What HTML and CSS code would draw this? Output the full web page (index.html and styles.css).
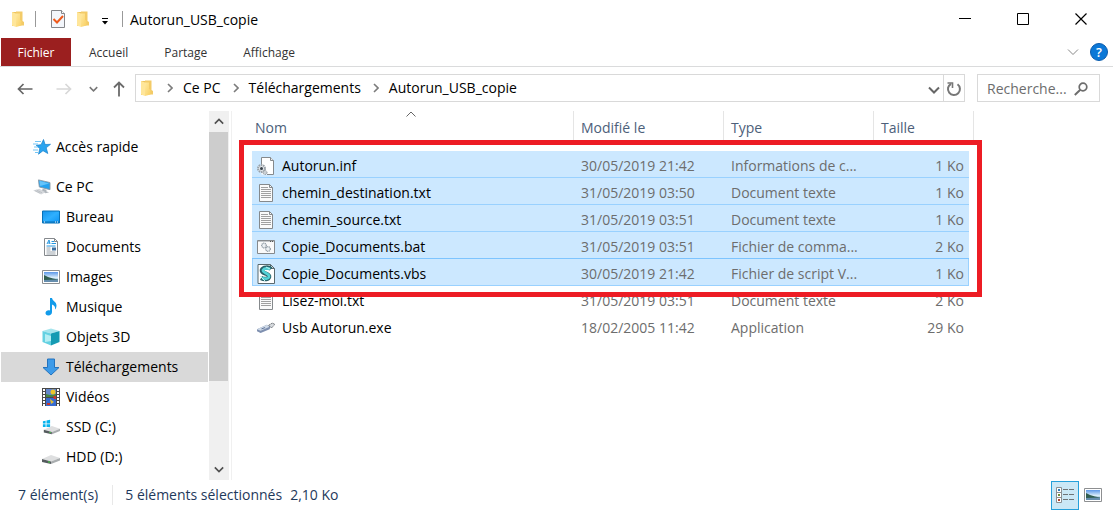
FILE: index.html
```html
<!DOCTYPE html>
<html lang="fr">
<head>
<meta charset="utf-8">
<meta name="viewport" content="width=device-width, initial-scale=1">
<title>Autorun_USB_copie</title>
<link rel="stylesheet" href="styles.css">
</head>
<body>
<svg class="sprite" aria-hidden="true">
  <defs>
    <linearGradient id="gold" x1="0" x2="1" y1="0" y2="1"><stop offset="0" stop-color="#ffe9a0"/><stop offset="1" stop-color="#f9cf62"/></linearGradient>
    <linearGradient id="blue" x1="0" x2="1" y1="0" y2="1"><stop offset="0" stop-color="#1592ea"/><stop offset=".5" stop-color="#2fb0ff"/><stop offset="1" stop-color="#0c93f3"/></linearGradient>
    <linearGradient id="sky" x1="0" x2="0" y1="0" y2="1"><stop offset="0" stop-color="#5b97e8"/><stop offset=".55" stop-color="#d9ecfa"/><stop offset="1" stop-color="#5f94b8"/></linearGradient>
  </defs>
  <symbol id="folder" viewBox="0 0 12 16"><path d="M0 1h6v14H0z" fill="#eec35c"/><path d="M4 .500h6.500v9.500l1.500 1v3.500H4z" fill="#f3cb68"/><path d="M0 1l4 1.500V16l-4-1.500z" fill="#ffe69a"/><path d="M4 2.500h4V9l1.500 1v4.500L4 16z" fill="url(#gold)"/></symbol>
  <symbol id="checkdoc" viewBox="0 0 14 18"><path d="M.5.500h10l3 3v14H.5z" fill="#f3f6fb" stroke="#85868a"/><path d="M10.500.500v3h3" fill="#fff" stroke="#85868a"/><path d="M2.500 9l3.500 3.500L12 6" fill="none" stroke="#ee5a1c" stroke-width="2"/></symbol>
  <symbol id="star" viewBox="0 0 18 16"><path d="M10.500.500l1.600 5 5.400-.200-4.300 3.500 1.600 5.700-4.800-2.800-4.500 3.500 1.300-5.700-3.600-3.200 4.900-.600z" fill="#2ba4ef" stroke="#1680cb" stroke-width=".7"/><path d="M2 2.500h6M0 5h5M1 8h4M0 11h5M2 13.500h3" stroke="#72c5f5"/></symbol>
  <symbol id="pc" viewBox="0 0 20 18"><path d="M6 1l13 3v8L7 9z" fill="#26a2ef" stroke="#8b98a5"/><path d="M7 2l11 3-10 3z" fill="#65c4fb"/><path d="M11 11l4 1v2l3 1-4 1-5-2z" fill="#aeb4ba"/><path d="M0 13l7-2 7 4-5 2.500z" fill="#d5d8dc"/><path d="M2 13l6 3M4 12.500l6 3" stroke="#a9aeb4" stroke-width=".6"/></symbol>
  <symbol id="desktop" viewBox="0 0 18 13"><path d="M.5.500h17v12H.5z" fill="url(#blue)" stroke="#0872b8"/><path d="M1 11.500h16" stroke="#076cb2"/><path d="M2 11.500h1M13 11.500h1M15 11.500h1" stroke="#fff"/></symbol>
  <symbol id="document" viewBox="0 0 14 18"><path d="M.5.500h10l3 3v14H.5z" fill="#fff" stroke="#85898d"/><path d="M10.500.500v3h3" fill="none" stroke="#85898d"/><path d="M3 6l2-4 1 4M4 5h2M7.500 3.500H10M7.500 5.500H12M2.500 8h9" fill="none" stroke="#2496df"/><path d="M2.500 10h4M2.500 12h4M2.500 14h9M2.500 16h9" stroke="#9ca5ad"/><path d="M8 9.500h4v3H8z" fill="#3e6f9f"/></symbol>
  <symbol id="picture" viewBox="0 0 18 14"><path d="M.5.500h17v13H.5z" fill="#fff" stroke="#8d8f91"/><path d="M2 2h14v10H2z" fill="url(#sky)"/><path d="M2 5l4 2 5 1.500 5 1V10H2z" fill="#315e50"/><path d="M2 10l14-.500V12H2z" fill="#668eae"/></symbol>
  <symbol id="music" viewBox="0 0 12 18"><path d="M5 0h2c.5 3 4.500 3.500 4.500 7.500 0 1.500-.5 3-1.500 4 .5-3-.8-4-3-5V14c0 2-1.500 3.500-3.800 3.500C1.500 17.500.5 16.500.5 15c0-2 2.500-3.500 4.500-2.500z" fill="#129bea"/></symbol>
  <symbol id="cube" viewBox="0 0 18 18"><path d="M9 .500L17.500 3 9 5.500.5 3z" fill="#a6e5ed"/><path d="M.5 3L9 5.500v12L.5 14z" fill="#64d1e2"/><path d="M9 5.500L17.500 3v11L9 17.500z" fill="#159bb3"/><path d="M3 6l6 2v5l-6 1z" fill="#b5eef3"/></symbol>
  <symbol id="down" viewBox="0 0 18 18"><path d="M5.500 1h7v8.500h4.500L9 17 1 9.500h4.500z" fill="#3d9be9" stroke="#2473bd"/></symbol>
  <symbol id="video" viewBox="0 0 18 18"><path d="M0 0h18v19H0z" fill="#494949"/><path d="M4 1h10v8H4z" fill="#6387ca"/><path d="M4 10h10v8H4z" fill="#376bd1"/><path d="M4 6l4 1 6-1v3H4z" fill="#458743"/><circle cx="11" cy="4" r="2.500" fill="#ecc629"/><path d="M11 8h3v3h-2zM5 15h3v2H5z" fill="#c9352b"/><path d="M8 11l4 3-3 2z" fill="#e2bd35"/><path d="M2 1v17M16 1v17" stroke="#fff" stroke-width="2" stroke-dasharray="2 1"/></symbol>
  <symbol id="disk" viewBox="0 0 18 16"><path d="M0 10l9-4 9 3-9 3.500z" fill="#dedfe0"/><path d="M0 10l9 2.500V15L0 13z" fill="#555b5e"/><path d="M9 12.500L18 9v2.500L9 15z" fill="#a9adaf"/><path d="M6 12.500h2v1H6z" fill="#45da43"/></symbol>
  <symbol id="ssd" viewBox="0 0 20 16"><path d="M1 1.500l3-.500v3H1zM5 .800L9 0v4H5zM1 5h3v3H1zM5 5h4v3H5z" fill="#06b3ed"/><path d="M2 11l9-4 9 3-9 3.500z" fill="#dedfe0"/><path d="M2 11l9 2.500V16l-9-2z" fill="#555b5e"/><path d="M11 13.500L20 10v2.500L11 16z" fill="#a9adaf"/><path d="M8 13.500h2v1H8z" fill="#45da43"/></symbol>
  <symbol id="inf" viewBox="0 0 18 18"><path d="M4.500.500h8l4 4v13h-12z" fill="#fff"/><path d="M4.500 8V.500h9l3 3v14H10" fill="none" stroke="#85898c"/><path d="M13.500.500v3h3" fill="#eee" stroke="#85898c"/><circle cx="4.500" cy="11.500" r="3.500" fill="#e0e4e7" stroke="#99a1a8" stroke-width="2" stroke-dasharray="1.500 .7"/><circle cx="4.500" cy="11.500" r="1.500" fill="#39434c"/><circle cx="8" cy="15.500" r="2" fill="#cbd0d4" stroke="#8a9299" stroke-dasharray="1.200 .6"/></symbol>
  <symbol id="txt" viewBox="0 0 18 18"><path d="M2.500.500h10l3 3v14h-13z" fill="#fafafa" stroke="#85898c"/><path d="M12.500.500v3h3" fill="none" stroke="#85898c"/><path d="M4 3.500h7M4 5.500h10M4 7.500h10M4 9.500h10M4 11.500h10M4 13.500h10" stroke="#a0a0a0"/></symbol>
  <symbol id="bat" viewBox="0 0 18 18"><path d="M.5 2.500h17v13H.5z" fill="#fafafa" stroke="#85898c"/><path d="M1 3.500h16" stroke="#c3c7ca"/><path d="M13 3.500h1M15 3.500h1" stroke="#555"/><circle cx="7" cy="7.500" r="2.300" fill="#edf1f4" stroke="#919ca5" stroke-width="1.300" stroke-dasharray="1 .5"/><circle cx="11" cy="11" r="2.300" fill="#edf1f4" stroke="#919ca5" stroke-width="1.300" stroke-dasharray="1 .5"/></symbol>
  <symbol id="vbs" viewBox="0 0 18 20"><path d="M1 .500h12.500l4 4v15H1z" fill="#fff" stroke="#59696e"/><path d="M13.500.500v4h4" fill="none" stroke="#59696e"/><path d="M14 5C12 3 6 3 5 6c-1 4 8 3 7 7-.5 2-4 3-8 1" fill="none" stroke="#28616a" stroke-width="4.500"/><path d="M13 5C11 4 7 4 6 6c-1 3 7 3 6 7-.5 2-4 2-7 1" fill="none" stroke="#54d3d8" stroke-width="2.700"/><path d="M3 12l5 5M9 3l4 2" stroke="#bdf5f4"/></symbol>
  <symbol id="usb" viewBox="0 0 20 14"><path d="M0 8.500l11-5 4 2-1 3-10 4-4-2z" fill="#7f90b0"/><path d="M0 8.500l11-5 3 2-10 4.500z" fill="#cfdae7"/><path d="M13 4l4-2.500L20 3l-4 4z" fill="#d6dade" stroke="#20252b" stroke-width=".8" stroke-dasharray="1.500 1"/><path d="M5 8l4-1.500" stroke="#556b92"/></symbol>
  <symbol id="chev-r" viewBox="0 0 6 10"><path d="M1 1l4 4-4 4" fill="none" stroke="#7c7c7c" stroke-width="1.600"/></symbol>
  <symbol id="chev-d" viewBox="0 0 12 8"><path d="M1 1.500l5 5 5-5" fill="none" stroke="currentColor" stroke-width="var(--stroke, 2)"/></symbol>
  <symbol id="arrow" viewBox="0 0 16 12"><path d="M15.500 6H1.500M6.500 1l-5 5 5 5" fill="none" stroke="currentColor" stroke-width="1.700"/></symbol>
</svg>

<div class="window">
  <header class="titlebar">
    <svg class="i-folder"><use href="#folder"/></svg>
    <span class="bar"></span>
    <button class="plain q-check" aria-label="Propriétés"><svg class="i-check"><use href="#checkdoc"/></svg></button>
    <button class="plain q-new" aria-label="Nouveau dossier"><svg class="i-folder"><use href="#folder"/></svg></button>
    <button class="plain q-more" aria-label="Personnaliser"><svg class="i-more" viewBox="0 0 8 8"><path d="M1 1.500h6" stroke="#000"/><path d="M1 4h6L4 7.500z"/></svg></button>
    <span class="bar"></span>
    <h1 class="title">Autorun_USB_copie</h1>
    <div class="controls">
      <button class="plain" aria-label="Réduire"><svg class="i-ctl" viewBox="0 0 12 12"><path d="M0 5.500h12" stroke="#000"/></svg></button>
      <button class="plain" aria-label="Agrandir"><svg class="i-ctl" viewBox="0 0 12 12"><path d="M.5.500h11v11H.5z" fill="none" stroke="#000"/></svg></button>
      <button class="plain" aria-label="Fermer"><svg class="i-ctl" viewBox="0 0 12 12"><path d="M.5.500l11 11M11.500.500l-11 11" stroke="#000" stroke-width="1.200"/></svg></button>
    </div>
  </header>

  <nav class="tabs">
    <button class="tab tab-file">Fichier</button>
    <button class="tab">Accueil</button>
    <button class="tab">Partage</button>
    <button class="tab">Affichage</button>
    <button class="plain tab-expand" aria-label="Développer le ruban"><svg class="i-chev thin"><use href="#chev-d"/></svg></button>
    <button class="help" aria-label="Aide">?</button>
  </nav>

  <div class="address-row">
    <button class="plain nav-btn" aria-label="Précédent"><svg class="i-arrow"><use href="#arrow"/></svg></button>
    <button class="plain nav-btn off" aria-label="Suivant"><svg class="i-arrow flip"><use href="#arrow"/></svg></button>
    <button class="plain nav-recent" aria-label="Emplacements récents"><svg class="i-chev-s"><use href="#chev-d"/></svg></button>
    <button class="plain nav-up" aria-label="Dossier parent"><svg class="i-up" viewBox="0 0 12 16"><path d="M6 15.500V1.500M1 6.500l5-5 5 5" fill="none" stroke="#6b6b6b" stroke-width="1.800"/></svg></button>
    <div class="address">
      <svg class="i-folder"><use href="#folder"/></svg>
      <svg class="i-sep"><use href="#chev-r"/></svg>
      <a class="crumb" href="#">Ce PC</a>
      <svg class="i-sep"><use href="#chev-r"/></svg>
      <a class="crumb" href="#">Téléchargements</a>
      <svg class="i-sep"><use href="#chev-r"/></svg>
      <a class="crumb" href="#">Autorun_USB_copie</a>
      <button class="plain addr-drop" aria-label="Historique"><svg class="i-chev"><use href="#chev-d"/></svg></button>
      <button class="plain refresh" aria-label="Actualiser"><svg class="i-refresh" viewBox="0 0 16 16"><path d="M11.500 3.200A6 6 0 1 1 5 2.800" fill="none" stroke="#777" stroke-width="2"/><path d="M1.500 2h5v5" fill="none" stroke="#777" stroke-width="1.600"/></svg></button>
    </div>
    <div class="search">
      <input class="search-input" type="text" placeholder="Recherche..." aria-label="Recherche">
      <svg class="i-search" viewBox="0 0 14 14"><circle cx="9" cy="5" r="3.800" fill="none" stroke="#6d6d6d" stroke-width="1.700"/><path d="M6.300 7.700L.8 13" stroke="#6d6d6d" stroke-width="2"/></svg>
    </div>
  </div>

  <main class="main">
    <nav class="tree">
      <a class="node root" href="#"><svg class="i-root"><use href="#star"/></svg>Accès rapide</a>
      <a class="node root pc" href="#"><svg class="i-root"><use href="#pc"/></svg>Ce PC</a>
      <a class="node" href="#"><svg class="i-node"><use href="#desktop"/></svg>Bureau</a>
      <a class="node" href="#"><svg class="i-node"><use href="#document"/></svg>Documents</a>
      <a class="node" href="#"><svg class="i-node"><use href="#picture"/></svg>Images</a>
      <a class="node" href="#"><svg class="i-node"><use href="#music"/></svg>Musique</a>
      <a class="node" href="#"><svg class="i-node"><use href="#cube"/></svg>Objets 3D</a>
      <a class="node current" href="#"><svg class="i-node"><use href="#down"/></svg>Téléchargements</a>
      <a class="node" href="#"><svg class="i-node"><use href="#video"/></svg>Vidéos</a>
      <a class="node" href="#"><svg class="i-node"><use href="#ssd"/></svg>SSD (C:)</a>
      <a class="node" href="#"><svg class="i-node"><use href="#disk"/></svg>HDD (D:)</a>
    </nav>
    <div class="scroll">
      <button class="plain scroll-btn" aria-label="Défiler vers le haut"><svg class="i-scroll up"><use href="#chev-d"/></svg></button>
      <div class="thumb"></div>
      <div class="track"></div>
      <button class="plain scroll-btn" aria-label="Défiler vers le bas"><svg class="i-scroll"><use href="#chev-d"/></svg></button>
    </div>
    <section class="pane">
      <table class="files">
        <colgroup><col class="c-name"><col class="c-mid"><col class="c-mid"><col class="c-size"><col class="c-end"></colgroup>
        <thead>
          <tr><th scope="col">Nom<svg class="sort" viewBox="0 0 10 6"><path d="M.5 5.500l4.500-4.500 4.500 4.500" fill="none" stroke="#666"/></svg></th><th scope="col">Modifié le</th><th scope="col">Type</th><th scope="col" colspan="2">Taille</th></tr>
        </thead>
        <tbody>
          <tr class="sel"><td><span class="file"><svg class="i-file"><use href="#inf"/></svg>Autorun.inf</span></td><td>30/05/2019 21:42</td><td>Informations de c...</td><td>1 Ko</td></tr>
          <tr class="sel"><td><span class="file"><svg class="i-file"><use href="#txt"/></svg>chemin_destination.txt</span></td><td>31/05/2019 03:50</td><td>Document texte</td><td>1 Ko</td></tr>
          <tr class="sel"><td><span class="file"><svg class="i-file"><use href="#txt"/></svg>chemin_source.txt</span></td><td>31/05/2019 03:51</td><td>Document texte</td><td>1 Ko</td></tr>
          <tr class="sel before-focus"><td><span class="file"><svg class="i-file"><use href="#bat"/></svg>Copie_Documents.bat</span></td><td>31/05/2019 03:51</td><td>Fichier de comma...</td><td>2 Ko</td></tr>
          <tr class="sel focus"><td><span class="file"><svg class="i-file tall"><use href="#vbs"/></svg>Copie_Documents.vbs</span></td><td>30/05/2019 21:42</td><td>Fichier de script V...</td><td>1 Ko</td></tr>
          <tr><td><span class="file"><svg class="i-file"><use href="#txt"/></svg>Lisez-moi.txt</span></td><td>31/05/2019 03:51</td><td>Document texte</td><td>2 Ko</td></tr>
          <tr><td><span class="file"><svg class="i-file"><use href="#usb"/></svg>Usb Autorun.exe</span></td><td>18/02/2005 11:42</td><td>Application</td><td>29 Ko</td></tr>
        </tbody>
      </table>
      <div class="highlight"></div>
    </section>
  </main>

  <footer class="status">
    <span class="count">7 élément(s)</span>
    <span class="picked">5 éléments sélectionnés</span>
    <span>2,10 Ko</span>
    <button class="view on" aria-label="Détails"><svg class="i-details" viewBox="0 0 18 16"><path d="M.5.500h5v15h-5zM.5 5.500h5M.5 10.500h5" fill="#fff" stroke="#8b8f92"/><path d="M2 3h2" stroke="#2e7cb5" stroke-width="2"/><path d="M2 8h2" stroke="#708b37" stroke-width="2"/><path d="M2 13h2" stroke="#b5442c" stroke-width="2"/><path d="M7 2.500h5M13 2.500h5M7 7.500h5M13 7.500h5M7 12.500h5M13 12.500h5" stroke="#6e7376"/></svg></button>
    <button class="view" aria-label="Grandes icônes"><svg class="i-large"><use href="#picture"/></svg></button>
  </footer>
</div>
</body>
</html>
```

FILE: styles.css
```css
* { box-sizing: border-box; }

body {
  margin: 0;
  background: #fff;
  color: #000;
  font: 14px/20px "Open Sans", "Noto Sans", sans-serif;
}

svg { display: block; flex: none; }
a { color: inherit; text-decoration: none; }
.sprite { position: absolute; width: 0; height: 0; }

.plain {
  display: flex;
  align-items: center;
  justify-content: center;
  padding: 0;
  border: 0;
  background: none;
  color: #666;
}

.window { display: flex; flex-direction: column; min-height: 100vh; }

/* Title bar */
.titlebar { display: flex; align-items: center; height: 38px; padding-left: 12px; }
.i-folder { width: 12px; height: 16px; }
.bar { width: 1px; height: 16px; margin-left: 11px; background: #999; }
.q-check { margin-left: 15px; }
.i-check { width: 14px; height: 18px; }
.q-new { margin-left: 12px; }
.q-more { margin-left: 12px; padding-top: 3px; }
.i-more { width: 8px; height: 8px; }
.q-more + .bar { margin-left: 13px; }
.title { margin: 0 0 0 7px; padding-top: 1px; font-size: 14px; font-weight: 400; line-height: 20px; }
.controls { display: flex; margin-left: auto; padding-right: 3px; }
.controls .plain { width: 58px; height: 38px; }
.i-ctl { width: 12px; height: 12px; }

/* Ribbon tabs */
.tabs { display: flex; align-items: center; padding: 0 5px 0 1px; border-bottom: 1px solid #dadbdc; }
.tab {
  height: 28px;
  padding: 1px 18px 0;
  border: 0;
  background: none;
  color: #333;
  font: 12px/16px "Open Sans", "Noto Sans", sans-serif;
}
.tab-file { width: 70px; padding: 1px 0 0; background: #9b1f1f; color: #fff; }
.tab-expand { margin-left: auto; }
.i-chev { width: 12px; height: 8px; }
.thin { --stroke: 1; color: #888; }
.help {
  width: 18px;
  height: 18px;
  margin-left: 11px;
  padding: 0;
  border: 1px solid #0b5cad;
  border-radius: 50%;
  background: #0b78d7;
  color: #fff;
  font: 600 13px/16px "Open Sans", sans-serif;
}

/* Address bar */
.address-row { display: flex; align-items: center; padding: 7px 13px 9px 17px; }
.nav-btn { width: 16px; height: 20px; padding-top: 2px; }
.i-arrow { width: 16px; height: 12px; }
.off { margin-left: 23px; color: #d8d8d8; }
.flip { transform: rotate(180deg); }
.nav-recent { margin-left: 17px; padding-top: 2px; color: #777; }
.i-chev-s { width: 9px; height: 6px; }
.nav-up { margin-left: 15px; padding-top: 2px; }
.i-up { width: 12px; height: 16px; }
.address {
  display: flex;
  flex: 1;
  align-items: center;
  height: 28px;
  margin-left: 10px;
  padding-left: 5px;
  border: 1px solid #d9d9d9;
}
.i-sep { width: 6px; height: 10px; margin-left: 12px; }
.i-folder + .i-sep { margin-left: 14px; }
.crumb { margin-left: 10px; }
.addr-drop { margin-left: auto; width: 19px; padding-top: 3px; }
.refresh { width: 21px; height: 26px; padding-top: 2px; border-left: 1px solid #d9d9d9; }
.i-refresh { width: 16px; height: 16px; }
.search {
  display: flex;
  align-items: center;
  width: 123px;
  height: 28px;
  margin-left: 12px;
  padding: 1px 11px 0 9px;
  border: 1px solid #d9d9d9;
}
.search-input {
  flex: 1;
  min-width: 0;
  padding: 0;
  border: 0;
  outline: 0;
  background: none;
  font: 14px/20px "Open Sans", "Noto Sans", sans-serif;
}
.search-input::placeholder { color: #6d6d6d; opacity: 1; }
.i-search { width: 14px; height: 14px; }

/* Navigation tree */
.main { display: flex; flex: 1; }
.tree { flex: none; width: 208px; padding: 21px 0 8px 1px; }
.node { display: flex; align-items: center; gap: 6px; height: 30px; padding-left: 41px; }
.root { gap: 4px; padding-left: 31px; }
.pc { margin-top: 10px; }
.i-root { width: 20px; height: 16px; }
.i-node { width: 18px; height: 18px; }
.current { background: #d9d9d9; }

.scroll { display: flex; flex: none; flex-direction: column; width: 20px; margin-left: 1px; background: #f0f0f0; }
.scroll-btn { height: 21px; color: #505050; }
.thumb { flex: 249; margin-right: 1px; background: #cdcdcd; }
.track { flex: 78; }
.i-scroll { width: 10px; height: 7px; }
.up { transform: rotate(180deg); }

/* File list */
.pane { position: relative; flex: 1; min-width: 0; margin-left: 2px; padding-left: 20px; border-left: 1px solid #f0f0f0; }
.files { width: 722px; table-layout: fixed; border-collapse: separate; border-spacing: 0; }
.c-name { width: 322px; }
.c-mid { width: 150px; }
.c-size { width: 95px; }
.c-end { width: 5px; }
.files th {
  position: relative;
  height: 29px;
  padding: 4px 0 0 7px;
  border-right: 1px solid #e5e5e5;
  color: #4c607a;
  font-weight: 400;
  text-align: left;
}
.files th:first-child { padding-left: 3px; }
.sort { position: absolute; top: 0; left: 50%; width: 10px; height: 6px; margin-left: -7px; }
.files tbody::before { content: ""; display: table-row; height: 11px; }
.files td {
  height: 27px;
  padding: 3px 0 0 7px;
  border-bottom: 1px solid transparent;
  color: #6d6d6d;
  white-space: nowrap;
}
.files td:first-child { padding-left: 5px; color: #000; }
.files td:nth-child(4) { padding-right: 5px; text-align: right; }
.sel td { background: #cce8ff; border-bottom-color: #99d1ff; }
.before-focus td { border-bottom-color: #7dc4ff; }
.focus td:first-child { border-left: 1px solid #99d1ff; padding-left: 4px; }
.focus td:nth-child(4) { border-right: 1px solid #99d1ff; padding-right: 4px; }
.file { display: flex; align-items: center; gap: 7px; }
.i-file { width: 18px; height: 18px; }
.tall { height: 20px; }
.highlight {
  position: absolute;
  top: 29px;
  left: 7px;
  width: 743px;
  height: 157px;
  border: 5px solid #ed1c24;
  pointer-events: none;
}

/* Status bar */
.status { display: flex; align-items: center; height: 30px; padding: 0 6px 0 18px; color: #1e395b; }
.count { padding-right: 14px; border-right: 1px solid #e8e8e8; }
.picked { margin: 0 8px 0 12px; }
.view {
  display: flex;
  align-items: center;
  justify-content: center;
  width: 28px;
  height: 29px;
  padding: 0;
  border: 1px solid transparent;
  background: none;
}
.on { margin-left: auto; border-color: #26a0da; background: #cbe8f6; }
.i-details { width: 18px; height: 16px; }
.i-large { width: 18px; height: 14px; }
```
